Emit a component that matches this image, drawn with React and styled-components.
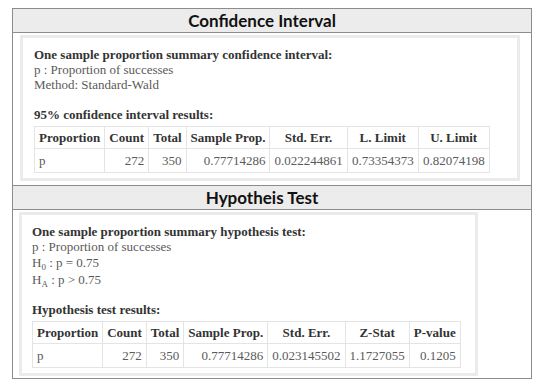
import styled, { createGlobalStyle } from 'styled-components';

const GlobalStyle = createGlobalStyle`
	body {
		margin: 0;
		background: #ffffff;
	}
`;

const Frame = styled.div`
	box-sizing: border-box;
	width: 520px;
	margin: 8px 0 0 12px;
	border: 1px solid #8c8c8c;
	border-top: none;
	padding-bottom: 2px;
`;

const Header = styled.div`
	box-sizing: border-box;
	height: 25px;
	margin-top: ${(p) => (p.$first ? 0 : 4)}px;
	padding-right: 20px;
	display: flex;
	align-items: center;
	justify-content: center;
	background: #ececec;
	border-top: 1px solid #8c8c8c;
	border-bottom: 1px solid #8c8c8c;
	font-family: Lato, 'Open Sans', sans-serif;
	font-weight: 700;
	font-size: 17px;
	color: #111;
`;

const Panel = styled.div`
	box-sizing: border-box;
	width: ${(p) => p.$width}px;
	margin: 2px 0 0 ${(p) => p.$left}px;
	border: 3px solid #ebebeb;
	padding: ${(p) => p.$top}px 0 ${(p) => p.$bottom}px ${(p) => p.$pad}px;
	font-family: 'Liberation Serif', 'Times New Roman', serif;
	font-size: 13px;
	line-height: 15px;
	color: #5a5a5a;
`;

const Title = styled.div`
	font-weight: 700;
	color: #333;
`;

const Line = styled.div`
	line-height: ${(p) => (p.$tall ? 17 : 15)}px;
`;

const Sub = styled.sub`
	font-size: 9px;
	line-height: 0;
	vertical-align: -3px;
`;

const Caption = styled.div`
	margin-top: ${(p) => p.$gap}px;
	font-weight: 700;
	color: #333;
	padding-bottom: 4px;
`;

const Table = styled.table`
	border-collapse: collapse;
	font-size: 13px;
`;

const Th = styled.th`
	height: 22px;
	padding: 0 4px;
	border: 1px solid #e4e4e4;
	font-weight: 700;
	color: #333;
	text-align: center;
	white-space: nowrap;
	width: ${(p) => p.$w}px;
	box-sizing: border-box;
`;

const Td = styled.td`
	height: 23px;
	padding: 0 4px;
	border: 1px solid #e4e4e4;
	text-align: ${(p) => (p.$left ? 'left' : 'right')};
	color: #5a5a5a;
	white-space: nowrap;
`;

function ResultTable({ headers, widths, values }) {
	return (
		<Table>
			<thead>
				<tr>
					{headers.map((h, i) => (
						<Th key={h} $w={widths[i]}>
							{h}
						</Th>
					))}
				</tr>
			</thead>
			<tbody>
				<tr>
					{values.map((v, i) => (
						<Td key={i} $left={i === 0}>
							{v}
						</Td>
					))}
				</tr>
			</tbody>
		</Table>
	);
}

export default function App() {
	return (
		<>
			<GlobalStyle />
			<Frame>
				<Header $first>Confidence Interval</Header>
				<Panel $width={500} $left={7} $pad={11} $top={9} $bottom={5}>
					<Title>One sample proportion summary confidence interval:</Title>
					<Line>p : Proportion of successes</Line>
					<Line>Method: Standard-Wald</Line>
					<Caption $gap={15}>95% confidence interval results:</Caption>
					<ResultTable
						headers={['Proportion', 'Count', 'Total', 'Sample Prop.', 'Std. Err.', 'L. Limit', 'U. Limit']}
						widths={[70, 44, 37, 83, 77, 71, 71]}
						values={['p', '272', '350', '0.77714286', '0.022244861', '0.73354373', '0.82074198']}
					/>
				</Panel>
				<Header>Hypotheis Test</Header>
				<Panel $width={459} $left={6} $pad={10} $top={9} $bottom={5}>
					<Title>One sample proportion summary hypothesis test:</Title>
					<Line>p : Proportion of successes</Line>
					<Line $tall>
						H<Sub>0</Sub> : p = 0.75
					</Line>
					<Line $tall>
						H<Sub>A</Sub> : p &gt; 0.75
					</Line>
					<Caption $gap={14}>Hypothesis test results:</Caption>
					<ResultTable
						headers={['Proportion', 'Count', 'Total', 'Sample Prop.', 'Std. Err.', 'Z-Stat', 'P-value']}
						widths={[69, 43, 35, 84, 75, 61, 51]}
						values={['p', '272', '350', '0.77714286', '0.023145502', '1.1727055', '0.1205']}
					/>
				</Panel>
			</Frame>
		</>
	);
}
